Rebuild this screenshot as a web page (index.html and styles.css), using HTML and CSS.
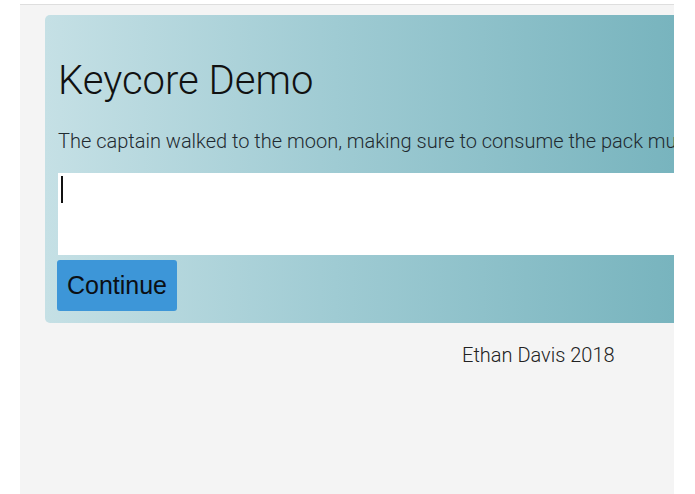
FILE: index.html
```html
<!DOCTYPE html>
<html>
<head>
<meta charset="utf-8">
<link rel="stylesheet" href="styles.css">
</head>
<body>
<div class="page">
  <div class="jumbotron">
    <h1 class="title">Keycore Demo</h1>
    <p class="lead">The captain walked to the moon, making sure to consume the pack mu</p>
    <div class="input"><span class="caret"></span></div>
    <button class="btn">Continue</button>
  </div>
  <footer class="footer">Ethan Davis 2018</footer>
</div>
</body>
</html>
```
FILE: styles.css
```css
html, body {
  margin: 0;
  padding: 0;
  background: #ffffff;
}
body {
  padding-top: 4px;
  font-family: Roboto, "Liberation Sans", sans-serif;
}
.page {
  margin-left: 20px;
  width: 654px;
  height: 490px;
  border-top: 1px solid #dedede;
  background: #f4f4f4;
  overflow: hidden;
  padding-top: 10px;
  box-sizing: border-box;
}
.jumbotron {
  margin-left: 25px;
  width: 900px;
  box-sizing: border-box;
  padding: 42px 13px 12px 13px;
  border-radius: 5px 0 0 5px;
  background: linear-gradient(to right, #c5e0e5 0px, #9fcbd3 290px, #78b4be 629px, #6aacb6 900px);
}
.title {
  margin: 0;
  font-family: Roboto, sans-serif;
  font-weight: 300;
  font-size: 40px;
  line-height: 48px;
  color: #111;
  white-space: nowrap;
}
.lead {
  margin: 23px 0 18px 0;
  font-size: 20px;
  font-weight: 300;
  line-height: 27px;
  color: #1f2a30;
  white-space: nowrap;
}
.input {
  height: 82px;
  background: #fff;
  padding: 3px 3px;
  box-sizing: border-box;
}
.caret {
  display: inline-block;
  width: 2px;
  height: 27px;
  background: #111;
}
.btn {
  display: block;
  margin-top: 5px;
  height: 51px;
  width: 120px;
  padding: 0;
  border: none;
  border-radius: 3px;
  background: #3d96d8;
  color: #0b0f14;
  font-family: "Liberation Sans", Arial, sans-serif;
  font-size: 25px;
  margin-left: -1px;
}
.footer {
  margin-top: 19px;
  padding-left: 442px;
  font-size: 20px;
  font-weight: 300;
  line-height: 27px;
  color: #222;
}
```
